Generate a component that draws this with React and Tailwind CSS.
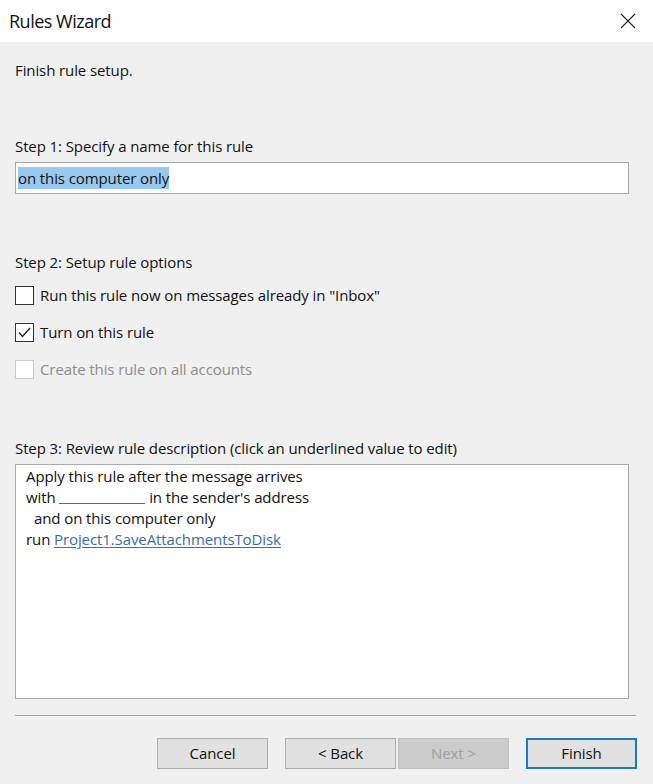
import React from "react";

const font = { fontFamily: '"Open Sans", "Noto Sans", sans-serif' };

function Checkbox({ checked, disabled }) {
  return (
    <div
      className={
        "w-[19px] h-[19px] border bg-white flex items-center justify-center shrink-0 " +
        (disabled ? "border-[#cccccc]" : "border-[#333333]")
      }
    >
      {checked && (
        <svg width="13" height="11" viewBox="0 0 13 11">
          <path d="M1 5.5 L4.5 9.5 L12 1" fill="none" stroke="#222" strokeWidth="1.4" />
        </svg>
      )}
    </div>
  );
}

function Btn({ children, disabled, primary }) {
  return (
    <div
      className={
        "w-[111px] h-[31px] flex items-center justify-center text-[15px] " +
        (disabled
          ? "bg-[#cccccc] border border-[#bfbfbf] text-[#a0a0a0]"
          : primary
          ? "bg-[#e1e1e1] border-2 border-[#1e78c8] text-[#111]"
          : "bg-[#e1e1e1] border border-[#adadad] text-[#111]")
      }
    >
      {children}
    </div>
  );
}

export default function App() {
  return (
    <div className="w-[653px] h-[784px] bg-[#f0f0f0] flex flex-col text-[#111]" style={font}>
      <div className="h-[42px] bg-white flex items-center justify-between pl-[9px] pr-[17px] shrink-0">
        <span className="text-[18px] tracking-[-0.5px] text-[#111]">Rules Wizard</span>
        <svg width="16" height="16" viewBox="0 0 16 16">
          <path d="M1 1 L15 15 M15 1 L1 15" stroke="#222" strokeWidth="1.1" />
        </svg>
      </div>

      <div className="flex flex-col px-[15px] text-[15px] tracking-[-0.1px]">
        <div className="mt-[17px] h-[22px] leading-[22px]">Finish rule setup.</div>

        <div className="mt-[54px] h-[22px] leading-[22px]">Step 1: Specify a name for this rule</div>
        <div className="mt-[5px] h-[32px] w-[614px] bg-white border border-[#a9a9a9] flex items-center pl-[2px]">
          <span className="bg-[#99c9ef] leading-[22px] h-[22px]">on this computer only</span>
        </div>

        <div className="mt-[57px] h-[22px] leading-[22px]">Step 2: Setup rule options</div>
        <div className="mt-[12px] flex items-center gap-[6px] h-[20px]">
          <Checkbox />
          <span>Run this rule now on messages already in "Inbox"</span>
        </div>
        <div className="mt-[17px] flex items-center gap-[6px] h-[20px]">
          <Checkbox checked />
          <span>Turn on this rule</span>
        </div>
        <div className="mt-[17px] flex items-center gap-[6px] h-[20px] text-[#8d8d8d]">
          <Checkbox disabled />
          <span>Create this rule on all accounts</span>
        </div>

        <div className="mt-[58px] h-[22px] leading-[22px]">
          Step 3: Review rule description (click an underlined value to edit)
        </div>
        <div className="mt-[5px] h-[235px] w-[614px] bg-white border border-[#a9a9a9] pl-[10px] pt-[1px] leading-[21px]">
          <div>Apply this rule after the message arrives</div>
          <div className="flex">
            <span>with&nbsp;</span>
            <span className="inline-block w-[86px] h-[17px] border-b border-[#3a6ea5]"></span>
            <span>&nbsp;in the sender's address</span>
          </div>
          <div className="pl-[8px]">and on this computer only</div>
          <div>
            run <span className="text-[#3a6ea5] underline underline-offset-2">Project1.SaveAttachmentsToDisk</span>
          </div>
        </div>

        <div className="mt-[16px] h-[1px] w-[621px] bg-[#a0a0a0] border-b border-white box-content"></div>

        <div className="mt-[21px] flex pl-[142px]">
          <Btn>Cancel</Btn>
          <div className="w-[17px]" />
          <Btn>&lt; Back</Btn>
          <div className="w-[2px]" />
          <Btn disabled>Next &gt;</Btn>
          <div className="w-[17px]" />
          <Btn primary>Finish</Btn>
        </div>
      </div>
    </div>
  );
}
